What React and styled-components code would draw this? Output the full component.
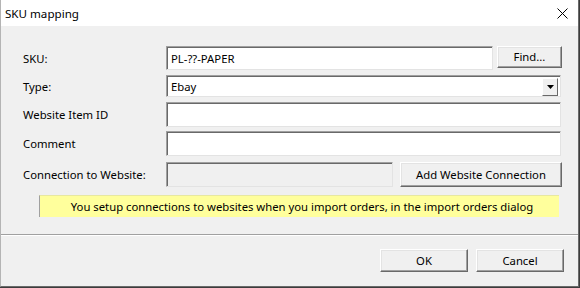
import React from 'react';
import styled, { createGlobalStyle } from 'styled-components';

const GlobalStyle = createGlobalStyle`
  html, body {
    margin: 0;
    padding: 0;
    background: #3c3c3c;
  }
  body {
    width: 580px;
    height: 288px;
    overflow: hidden;
    font-family: "Noto Sans", "Open Sans", sans-serif;
    font-size: 11.3px;
    color: #000;
  }
`;

const Window = styled.div`
  width: 577px;
  height: 286px;
  background: #f0f0f0;
  border-left: 1px solid #b4b4b4;
  border-right: 1px solid #6a6a6a;
  border-bottom: 1px solid #6a6a6a;
  display: flex;
  flex-direction: column;
`;

const TitleBar = styled.div`
  height: 26px;
  flex-shrink: 0;
  background: #fff;
  display: flex;
  align-items: center;
  justify-content: space-between;
  padding: 0 10px 0 4px;
  font-size: 11.6px;
`;

const CloseIcon = styled.svg`
  width: 11px;
  height: 11px;
  margin-top: 1px;
`;

const Body = styled.div`
  display: flex;
  flex-direction: column;
  padding: 20px 16px 0 22px;
`;

const Row = styled.div`
  display: flex;
  align-items: center;
  height: ${p => p.$h || 24}px;
  margin-bottom: ${p => p.$gap ?? 5}px;
`;

const Label = styled.div`
  width: 143px;
  flex-shrink: 0;
`;

const Field = styled.div`
  box-sizing: border-box;
  width: ${p => p.$w}px;
  height: ${p => p.$h || 24}px;
  background: ${p => (p.$disabled ? '#f0f0f0' : '#fff')};
  border-top: 1px solid #a0a0a0;
  border-left: 1px solid #a0a0a0;
  border-right: 1px solid #e3e3e3;
  border-bottom: 1px solid #e3e3e3;
  box-shadow: inset 1px 1px 0 #696969;
  padding: 0 4px;
  display: flex;
  align-items: center;
`;

const Combo = styled(Field)`
  justify-content: space-between;
  padding: 0 2px 0 4px;
`;

const ArrowButton = styled.div`
  box-sizing: border-box;
  width: 16px;
  height: 18px;
  margin-top: 1px;
  background: #f0f0f0;
  border-top: 1px solid #fff;
  border-left: 1px solid #fff;
  border-right: 1px solid #696969;
  border-bottom: 1px solid #696969;
  display: flex;
  align-items: center;
  justify-content: center;
`;

const Button = styled.button`
  box-sizing: border-box;
  width: ${p => p.$w}px;
  height: ${p => p.$h || 22}px;
  margin-left: ${p => p.$ml || 0}px;
  align-self: ${p => (p.$top ? 'flex-start' : 'auto')};
  font: inherit;
  color: #000;
  background: #f0f0f0;
  border: none;
  border-top: 1px solid #fff;
  border-left: 1px solid #fff;
  border-right: 1px solid #696969;
  border-bottom: 1px solid #696969;
  box-shadow: inset -1px -1px 0 #a0a0a0, inset 1px 1px 0 #e3e3e3;
  padding: 0 0 1px;
`;

const Note = styled.div`
  box-sizing: border-box;
  margin: 0 3px 0 16px;
  height: 22px;
  background: #ffff9c;
  border-left: 1px solid #a0a0a0;
  border-top: 1px solid #e8e8a0;
  display: flex;
  align-items: center;
  justify-content: center;
  padding-left: 5px;
`;

const Separator = styled.div`
  height: 1px;
  background: #a0a0a0;
  border-bottom: 1px solid #fff;
  margin-top: 17px;
`;

const Footer = styled.div`
  display: flex;
  justify-content: flex-end;
  gap: 8px;
  padding: 13px 14px 0 0;
`;

export default function App() {
  return (
    <>
      <GlobalStyle />
      <Window>
        <TitleBar>
          <span>SKU mapping</span>
          <CloseIcon viewBox="0 0 11 11">
            <path d="M0.5 0.5 L10.5 10.5 M10.5 0.5 L0.5 10.5" stroke="#000" strokeWidth="1" fill="none" />
          </CloseIcon>
        </TitleBar>
        <Body>
          <Row $h={24}>
            <Label>SKU:</Label>
            <Field $w={327}>PL-??-PAPER</Field>
            <Button $w={65} $ml={4} $top>Find...</Button>
          </Row>
          <Row $h={22} $gap={5}>
            <Label>Type:</Label>
            <Combo $w={395} $h={22}>
              <span>Ebay</span>
              <ArrowButton>
                <svg width="7" height="4" viewBox="0 0 7 4">
                  <path d="M0 0 H7 L3.5 4 Z" fill="#000" />
                </svg>
              </ArrowButton>
            </Combo>
          </Row>
          <Row $h={25} $gap={4}>
            <Label>Website Item ID</Label>
            <Field $w={395} $h={25} />
          </Row>
          <Row $h={25} $gap={6}>
            <Label>Comment</Label>
            <Field $w={395} $h={25} />
          </Row>
          <Row $h={25} $gap={8}>
            <Label>Connection to Website:</Label>
            <Field $w={228} $h={25} $disabled />
            <Button $w={163} $h={25} $ml={7}>Add Website Connection</Button>
          </Row>
          <Note>You setup connections to websites when you import orders, in the import orders dialog</Note>
        </Body>
        <Separator />
        <Footer>
          <Button $w={88} $h={23}>OK</Button>
          <Button $w={88} $h={23}>Cancel</Button>
        </Footer>
      </Window>
    </>
  );
}
